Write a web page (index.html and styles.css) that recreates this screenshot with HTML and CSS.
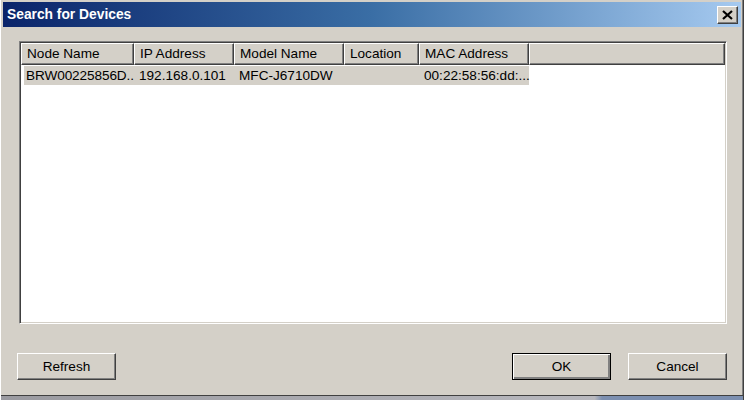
FILE: index.html
```html
<!DOCTYPE html>
<html>
<head>
<meta charset="utf-8">
<link rel="stylesheet" href="styles.css">
</head>
<body>
<div class="window">
  <div class="titlebar">
    <span class="title">Search for Devices</span>
    <span class="close"><svg width="11" height="10" viewBox="0 0 11 10"><path d="M1 1 L10 9 M10 1 L1 9" stroke="#000" stroke-width="2.2"/></svg></span>
  </div>
  <div class="content">
    <div class="listbox">
      <div class="header">
        <div class="hcell c1">Node Name</div>
        <div class="hcell c2">IP Address</div>
        <div class="hcell c3">Model Name</div>
        <div class="hcell c4">Location</div>
        <div class="hcell c5">MAC Address</div>
        <div class="hcell rest"></div>
      </div>
      <div class="row">
        <div class="cell c1 first">BRW00225856D...</div>
        <div class="cell c2">192.168.0.101</div>
        <div class="cell c3">MFC-J6710DW</div>
        <div class="cell c4"></div>
        <div class="cell c5">00:22:58:56:dd:...</div>
      </div>
    </div>
    <div class="buttons">
      <button class="btn">Refresh</button>
      <div class="spacer"></div>
      <button class="btn default">OK</button>
      <button class="btn">Cancel</button>
    </div>
  </div>
  <div class="below"></div>
</div>
</body>
</html>
```
FILE: styles.css
```css
html, body {
  margin: 0;
  padding: 0;
}
body {
  width: 744px;
  height: 400px;
  overflow: hidden;
  background: #d4d0c8;
  font-family: "Liberation Sans", Arial, sans-serif;
  font-size: 13.6px;
  color: #000;
}
.window {
  width: 744px;
  height: 400px;
  box-sizing: border-box;
  display: flex;
  flex-direction: column;
  background: #d4d0c8;
  border-left: 1px solid #ffffff;
  border-right: 1px solid #404040;
  padding: 2px 2px 0 2px;
  box-shadow: inset -1px 0 0 #808080;
}
.titlebar {
  height: 25px;
  display: flex;
  align-items: center;
  justify-content: space-between;
  background: linear-gradient(to right, #0a246a 0%, #3a6ea5 50%, #a6caf0 100%);
  padding: 0 3px 0 4px;
}
.title {
  color: #fff;
  font-weight: bold;
  font-size: 13.8px;
}
.close {
  width: 21px;
  height: 18px;
  box-sizing: border-box;
  background: #d4d0c8;
  border-top: 1px solid #fff;
  border-left: 1px solid #fff;
  border-right: 1px solid #404040;
  border-bottom: 1px solid #404040;
  box-shadow: inset -1px -1px 0 #808080;
  display: flex;
  align-items: center;
  justify-content: center;
}
.content {
  flex: 1;
  display: flex;
  flex-direction: column;
  padding: 14px 14px 0 16px;
}
.listbox {
  height: 283px;
  box-sizing: border-box;
  background: #fff;
  border-top: 1px solid #808080;
  border-left: 1px solid #808080;
  border-right: 1px solid #fff;
  border-bottom: 1px solid #fff;
  box-shadow: inset 1px 1px 0 #404040, inset -1px -1px 0 #d4d0c8;
  padding: 1px 1px 0 1px;
}
.header {
  display: flex;
  height: 22px;
  background: #d4d0c8;
}
.hcell {
  box-sizing: border-box;
  height: 22px;
  line-height: 20px;
  padding-left: 5px;
  border-top: 1px solid #fff;
  border-left: 1px solid #fff;
  border-right: 1px solid #404040;
  border-bottom: 1px solid #404040;
  box-shadow: inset -1px -1px 0 #808080;
  white-space: nowrap;
}
.c1 { width: 113px; }
.c2 { width: 100px; }
.c3 { width: 110px; }
.c4 { width: 75px; }
.c5 { width: 110px; }
.rest { flex: 1; }
.row {
  display: flex;
  margin-top: 1px;
  height: 19px;
}
.cell {
  box-sizing: border-box;
  background: #d4d0c8;
  line-height: 19px;
  padding-left: 5px;
  white-space: nowrap;
}
.cell.first {
  margin-left: 3px;
  width: 110px;
  padding-left: 2px;
  letter-spacing: -0.1px;
}
.buttons {
  display: flex;
  gap: 17px;
  margin-top: 29px;
  margin-left: -2px;
  margin-right: 0;
}
.spacer { flex: 1; }
.btn {
  width: 99px;
  height: 27px;
  box-sizing: border-box;
  background: #d4d0c8;
  font-family: "Liberation Sans", Arial, sans-serif;
  font-size: 13.6px;
  color: #000;
  border-top: 1px solid #fff;
  border-left: 1px solid #fff;
  border-right: 1px solid #404040;
  border-bottom: 1px solid #404040;
  box-shadow: inset -1px -1px 0 #808080;
  padding: 0;
}
.btn.default {
  border: 1px solid #000;
  box-shadow: inset 1px 1px 0 #fff, inset -2px -2px 0 #808080;
}
.below {
  height: 4px;
  margin: 0 -2px;
  border-top: 1px solid #404040;
  background: linear-gradient(to right, #9a9aa0 0%, #b8b8be 80%, #7c8fb0 81%, #7c8fb0 100%);
}
```
